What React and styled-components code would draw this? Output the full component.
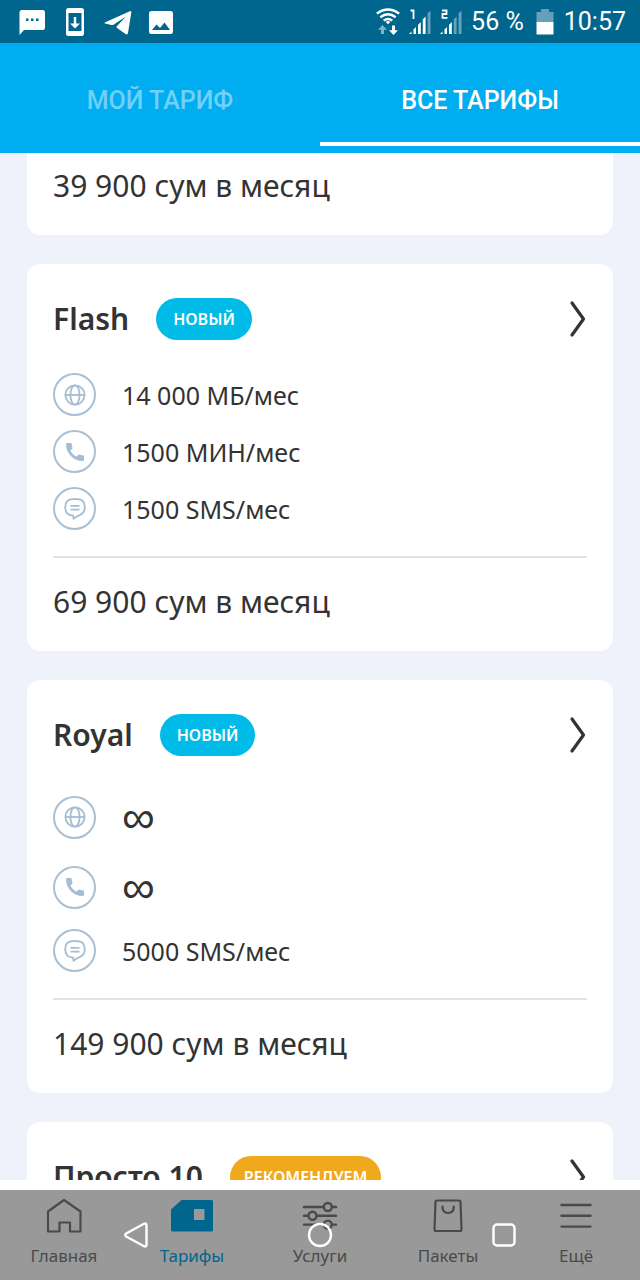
import React, { useState } from "react";
import styled, { createGlobalStyle } from "styled-components";

const GlobalStyle = createGlobalStyle`
  * {
    box-sizing: border-box;
  }
  body {
    margin: 0;
    background-color: #ffffff;
    color: #333333;
    font-family: "Noto Sans", "Open Sans", sans-serif;
  }
  button {
    font: inherit;
    color: inherit;
    border: none;
    background: none;
    padding: 0;
    cursor: pointer;
  }
`;

const plans = [
  {
    name: "Flash",
    badge: "НОВЫЙ",
    rows: [
      { icon: "globe", text: "14 000 МБ/мес" },
      { icon: "phone", text: "1500 МИН/мес" },
      { icon: "sms", text: "1500 SMS/мес" },
    ],
    price: "69 900 сум в месяц",
  },
  {
    name: "Royal",
    badge: "НОВЫЙ",
    rows: [
      { icon: "globe", unlimited: true },
      { icon: "phone", unlimited: true },
      { icon: "sms", text: "5000 SMS/мес" },
    ],
    price: "149 900 сум в месяц",
  },
  {
    name: "Просто 10",
    badge: "РЕКОМЕНДУЕМ",
    recommended: true,
    rows: [],
  },
];

const rowIcons = {
  globe: (
    <svg width="22" height="22" viewBox="0 0 22 22" fill="none" stroke="#a5bdd3" strokeWidth="1.8">
      <circle cx="11" cy="11" r="9.6" />
      <ellipse cx="11" cy="11" rx="4.6" ry="9.6" />
      <path d="M1.4 11h19.2" />
    </svg>
  ),
  phone: (
    <svg width="22" height="22" viewBox="0 0 22 22" fill="#a5bdd3">
      <path d="M2 3.2Q2 2 3.2 2H6.6Q7.7 2 7.8 3.1Q7.9 5 8.4 6.6Q8.6 7.3 8.1 7.9L6.3 9.8Q8.5 13.6 12.3 15.7L14.1 13.9Q14.7 13.4 15.4 13.6Q17 14.1 18.9 14.2Q20 14.3 20 15.4V18.8Q20 20 18.8 20Q11.5 19.7 6.8 14.9Q2.2 10.2 2 3.2Z" />
    </svg>
  ),
  sms: (
    <svg width="22" height="22" viewBox="0 0 22 22" fill="none" stroke="#a5bdd3" strokeWidth="1.8" strokeLinejoin="round">
      <path d="M9 1.2H13Q20.8 1.2 20.8 9.3Q20.8 15.5 15 17.3Q12.5 18.3 9.5 20.8L9.3 17.7Q1.2 17.3 1.2 9.3Q1.2 1.2 9 1.2Z" />
      <path d="M6.5 7.8h9M6.5 11.7h9" />
    </svg>
  ),
};

const navItems = [
  {
    label: "Главная",
    icon: (
      <svg width="44" height="36" viewBox="0 0 44 36" fill="none" stroke="currentColor" strokeWidth="2.2" strokeLinejoin="round">
        <path d="M6 33.5V13.5L22 2L38.5 13.5V33.5H28V24.5H17.5V33.5Z" />
      </svg>
    ),
  },
  {
    label: "Тарифы",
    icon: (
      <svg width="44" height="36" viewBox="0 0 44 36" fill="currentColor" fillRule="evenodd">
        <path d="M1 11.5L11.5 2H41.5Q43 2 43 3.5V32Q43 33.5 41.5 33.5H2.5Q1 33.5 1 32ZM24 11V22H34.5V11Z" />
      </svg>
    ),
  },
  {
    label: "Услуги",
    icon: (
      <svg width="44" height="36" viewBox="0 0 44 36" fill="none" stroke="currentColor" strokeWidth="2.4" strokeLinecap="round">
        <path d="M6 9h19.500M34 9h4M6 17.8h4M19 17.8h19M6 26.600h19.500M34 26.600h4" />
        <circle cx="29.8" cy="9" r="4" />
        <circle cx="14.5" cy="17.8" r="4" />
        <circle cx="29.8" cy="26.600" r="4" />
      </svg>
    ),
  },
  {
    label: "Пакеты",
    icon: (
      <svg width="44" height="36" viewBox="0 0 44 36" fill="none" stroke="currentColor" strokeWidth="2.2" strokeLinejoin="round" strokeLinecap="round">
        <path d="M11 2.500H33Q34.500 2.500 34.500 4L35.500 31.500Q35.500 33 34 33H10Q8.500 33 8.500 31.500L9.500 4Q9.500 2.500 11 2.500Z" />
        <path d="M16.500 8.500Q16.500 15 22 15Q27.800 15 27.800 8.500" />
      </svg>
    ),
  },
  {
    label: "Ещё",
    icon: (
      <svg width="44" height="36" viewBox="0 0 44 36" fill="none" stroke="currentColor" strokeWidth="2.4" strokeLinecap="round">
        <path d="M7.5 7h29M7.5 17.8h29M7.5 28.6h29" />
      </svg>
    ),
  },
];

const Signal = ({ sim, bars }) => (
  <svg width="24" height="28" viewBox="0 0 24 28" fill="#ffffff">
    <g fill="none" stroke="#ffffff" strokeWidth="1.8">
      {sim === 1 ? <path d="M2.5 2.5H5.5V11" /> : <path d="M3 2.5H7.5V6H3.5V9.800H8.500" />}
    </g>
    <path d="M1 26L3.500 23.500V26Z" />
    <path d="M5.500 21.500L8 19V26H5.500Z" />
    <path d="M10 17L12.800 14V26H10Z" />
    <path d="M14.800 11.500L17.600 8.500V26H14.800Z" opacity={bars > 3 ? 1 : 0.4} />
    <path d="M19.600 5.500L22.500 2.500V26H19.600Z" opacity="0.4" />
  </svg>
);

const PlanCard = ({ plan }) => (
  <Card>
    <CardHeader>
      <PlanName>{plan.name}</PlanName>
      <Badge $recommended={plan.recommended}>{plan.badge}</Badge>
      <OpenButton aria-label={plan.name}>
        <svg width="18" height="38" viewBox="0 0 18 38" fill="none" stroke="#333333" strokeWidth="3.2" strokeLinecap="round" strokeLinejoin="round">
          <path d="M3 3L14.5 19L3 35" />
        </svg>
      </OpenButton>
    </CardHeader>
    {plan.rows.map((row) => (
      <Row key={row.icon} $tall={row.unlimited}>
        <RowIcon>{rowIcons[row.icon]}</RowIcon>
        {row.unlimited ? <Infinite>∞</Infinite> : <span>{row.text}</span>}
      </Row>
    ))}
    {plan.price && (
      <>
        <Divider />
        <Price>{plan.price}</Price>
      </>
    )}
  </Card>
);

const App = () => {
  const [tab, setTab] = useState("ВСЕ ТАРИФЫ");
  const [page, setPage] = useState("Тарифы");

  return (
    <Screen>
      <GlobalStyle />
      <StatusBar>
        <StatusIcons>
          <svg width="28" height="28" viewBox="0 0 28 28" fill="#ffffff" fillRule="evenodd">
            <path d="M3.5 2H24.5Q27 2 27 4.5V19.5Q27 22 24.5 22H6L1.5 27V4.5Q1.5 2 3.5 2ZM8 10.5V13H10.5V10.5ZM13 10.5V13H15.5V10.5ZM18 10.5V13H20.5V10.5Z" />
          </svg>
          <svg width="28" height="28" viewBox="0 0 28 28" fill="#ffffff" fillRule="evenodd">
            <path d="M7.5 0H20.5Q23 0 23 2.5V25.5Q23 28 20.5 28H7.5Q5 28 5 25.5V2.5Q5 0 7.5 0ZM7.5 5V23H20.5V5ZM12.8 9H15.2V15.5H19L14 20.5L9 15.5H12.8Z" />
          </svg>
          <svg width="28" height="28" viewBox="0 0 28 28" fill="#ffffff">
            <path d="M.8 14.600L25.8 3.2Q27.5 2.7 27.3 4.5L24 25Q23.5 27.300 21.5 26L12.8 19.8Q12 19 12.8 18.2L22 8.500L9.500 16.700Q8.500 17.300 7.400 17L1 15.500Q0 15.100 .8 14.600Z" />
          </svg>
          <svg width="28" height="28" viewBox="0 0 28 28" fill="#ffffff" fillRule="evenodd">
            <path d="M4.5 3H23.5Q26 3 26 5.5V23.5Q26 26 23.5 26H4.5Q2 26 2 23.5V5.5Q2 3 4.5 3ZM5 22H23L17.5 14.5L13 20L9.5 16.5Z" />
          </svg>
        </StatusIcons>
        <StatusInfo>
          <Network>
            <svg width="26" height="28" viewBox="0 0 26 28" fill="none" stroke="#ffffff" strokeWidth="2.4">
              <path d="M1.8 5.600Q13-2.600 24.200 5.600M5.300 9.300Q13 3.400 20.700 9.300M8.700 12.600Q13 9.200 17.300 12.600" />
              <path d="M10.700 13.900L13 16.200L15.300 13.900Q13 12.300 10.700 13.900Z" fill="#ffffff" stroke="none" />
              <path d="M7.500 17L12 21.800H9V26H6V21.800H3Z" fill="#7fb3c9" stroke="none" />
              <path d="M18.500 27L23 22.200H20V17.500H17V22.200H14Z" fill="#ffffff" stroke="none" />
            </svg>
            <Signal sim={1} bars={4} />
            <Signal sim={2} bars={3} />
          </Network>
          <span>56 %</span>
          <Battery width="18" height="28" viewBox="0 0 18 28">
            <path d="M5 1H13V4H17.5V14H.5V4H5Z" fill="#669fb9" />
            <path d="M.5 14H17.5V26.5H.5Z" fill="#ffffff" />
          </Battery>
          <span>10:57</span>
        </StatusInfo>
      </StatusBar>

      <Tabs>
        {["МОЙ ТАРИФ", "ВСЕ ТАРИФЫ"].map((name) => (
          <Tab key={name} $active={tab === name} onClick={() => setTab(name)}>
            {name}
          </Tab>
        ))}
      </Tabs>

      <List>
        <Card $continued>
          <Price $first>39 900 сум в месяц</Price>
        </Card>
        {plans.map((plan) => (
          <PlanCard key={plan.name} plan={plan} />
        ))}
      </List>

      <BottomNav>
        {navItems.map((item) => (
          <NavItem key={item.label} $active={page === item.label} onClick={() => setPage(item.label)}>
            {item.icon}
            {item.label}
          </NavItem>
        ))}
        <SystemKeys>
          <SystemKey aria-label="Назад">
            <svg width="26" height="26" viewBox="0 0 26 26">
              <path d="M21 1.8Q23.5 .8 23.5 3.5V22.5Q23.5 25.2 21 24.2L3.2 14.5Q1.2 13 3.2 11.5Z" />
            </svg>
          </SystemKey>
          <SystemKey aria-label="Домой">
            <svg width="26" height="26" viewBox="0 0 26 26">
              <circle cx="13" cy="13" r="11" />
            </svg>
          </SystemKey>
          <SystemKey aria-label="Недавние">
            <svg width="26" height="26" viewBox="0 0 26 26">
              <rect x="2.5" y="2.5" width="21" height="21" rx="3.5" />
            </svg>
          </SystemKey>
        </SystemKeys>
      </BottomNav>
    </Screen>
  );
};

const Screen = styled.div`
  display: flex;
  flex-direction: column;
  height: 100vh;
`;

const StatusBar = styled.header`
  flex: none;
  display: flex;
  align-items: center;
  justify-content: space-between;
  height: 43px;
  padding: 0 14px 0 18px;
  background-color: #00668e;
  color: #ffffff;
  font-family: Roboto, sans-serif;
  font-size: 25px;
`;

const StatusIcons = styled.div`
  display: flex;
  gap: 15px;
`;

const StatusInfo = styled.div`
  display: flex;
  align-items: center;
  gap: 8px;
`;

const Network = styled.div`
  display: flex;
  gap: 7px;
`;

const Battery = styled.svg`
  margin: 0 2px 0 4px;
`;

const Tabs = styled.nav`
  flex: none;
  display: grid;
  grid-template-columns: 1fr 1fr;
  height: 110px;
  padding-bottom: 7px;
  background-color: #00adf0;
`;

const Tab = styled.button`
  && {
    padding-top: 15px;
    border-bottom: 4px solid ${(props) => (props.$active ? "#ffffff" : "transparent")};
    color: ${(props) => (props.$active ? "#ffffff" : "#70d0f7")};
    font-family: Roboto, sans-serif;
    font-size: 25px;
    font-weight: 500;
  }
`;

const List = styled.main`
  flex: 1;
  min-height: 0;
  display: flex;
  flex-direction: column;
  gap: 29px;
  padding: 0 27px;
  overflow: hidden;
  background-color: #eff2fb;
`;

const Card = styled.section`
  flex: none;
  padding: 0 26px;
  border-radius: ${(props) => (props.$continued ? "0 0 13px 13px" : "13px")};
  background-color: #ffffff;
`;

const CardHeader = styled.div`
  display: flex;
  align-items: center;
  padding: 34px 0 26px;
`;

const PlanName = styled.h2`
  margin: 0 27px 0 0;
  font-size: 30px;
  line-height: 42px;
  font-weight: 600;
`;

const Badge = styled.span`
  padding: 0 ${(props) => (props.$recommended ? "14px" : "17px")};
  border-radius: 21px;
  background-color: ${(props) => (props.$recommended ? "#f0a81c" : "#00bbe7")};
  color: #ffffff;
  font-size: 16px;
  line-height: 42px;
  font-weight: 600;
`;

const OpenButton = styled.button`
  display: flex;
  margin-left: auto;
`;

const Row = styled.div`
  display: flex;
  align-items: center;
  gap: 26px;
  height: ${(props) => (props.$tall ? "70px" : "57px")};
  font-size: 25px;
`;

const RowIcon = styled.span`
  flex: none;
  display: flex;
  align-items: center;
  justify-content: center;
  width: 43px;
  height: 43px;
  border: 2px solid #a9bfd4;
  border-radius: 50%;
`;

const Infinite = styled.span`
  font-family: "Liberation Sans", sans-serif;
  font-size: 46px;
  line-height: 40px;
`;

const Divider = styled.hr`
  height: 2px;
  margin: 19px 0 0;
  border: none;
  background-color: #e1e3ea;
`;

const Price = styled.p`
  margin: 0;
  padding: ${(props) => (props.$first ? "17px 0 33px" : "28px 0 33px")};
  font-size: 30px;
  line-height: 32px;
`;

const BottomNav = styled.nav`
  flex: none;
  position: relative;
  display: grid;
  grid-template-columns: repeat(5, 1fr);
  height: 90px;
  margin-top: 10px;
  background-color: #999999;
`;

const NavItem = styled.button`
  && {
    display: flex;
    flex-direction: column;
    align-items: center;
    gap: 8px;
    padding-top: 8px;
    color: ${(props) => (props.$active ? "#00668e" : "#4a4a4a")};
    font-size: 17px;
    line-height: 28px;
  }
`;

/* the translucent system keys lie over the app's own navigation */
const SystemKeys = styled.div`
  position: absolute;
  inset: 0;
  display: grid;
  grid-template-columns: repeat(3, 1fr);
  place-items: center;
  padding: 0 44px;
  pointer-events: none;
`;

const SystemKey = styled.button`
  display: flex;
  pointer-events: auto;

  svg {
    fill: none;
    stroke: #ffffff;
    stroke-width: 2.4px;
  }
`;

export default App;
